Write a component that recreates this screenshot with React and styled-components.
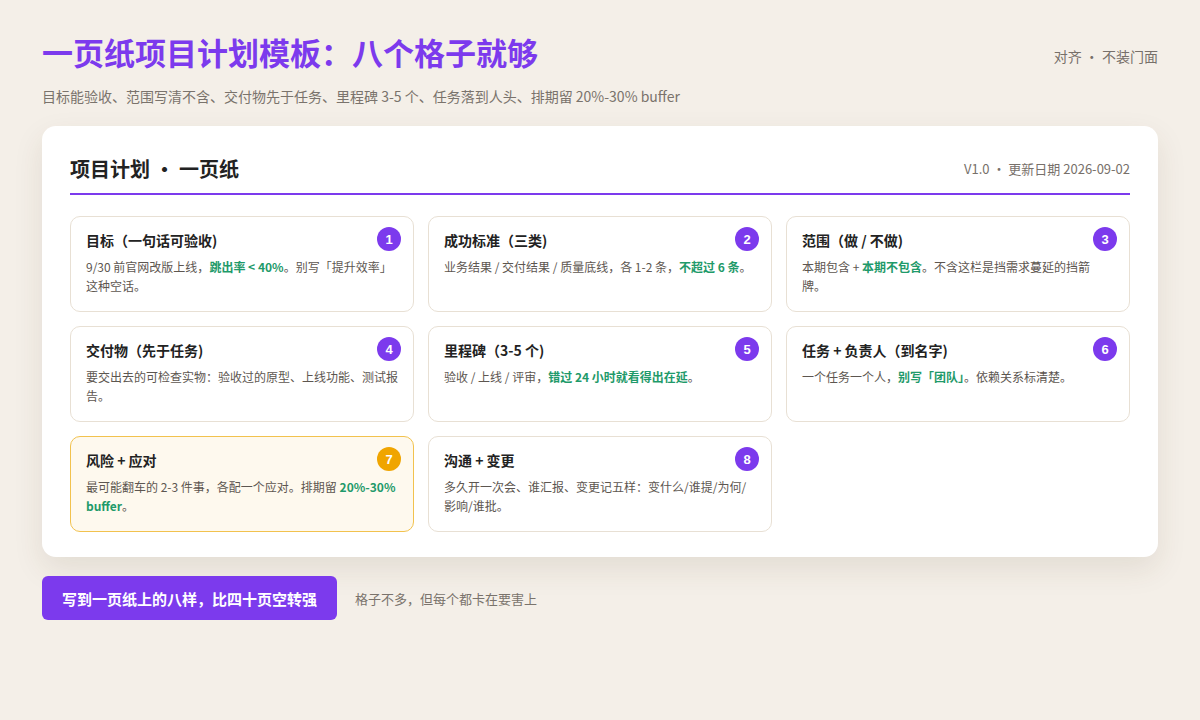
import React from "react";
import styled, { createGlobalStyle } from "styled-components";

const Global = createGlobalStyle`
  body { margin: 0; background: #f4efe8; font-family: "Noto Sans CJK SC", "Noto Sans", sans-serif; }
`;

const Page = styled.div`
  padding: 30px 42px;
`;

const Top = styled.div`
  display: flex;
  justify-content: space-between;
  align-items: flex-start;
`;

const Title = styled.h1`
  margin: 0;
  font-size: 31px;
  line-height: 44px;
  color: #7c3aed;
  font-weight: 700;
`;

const Tag = styled.div`
  font-size: 14px;
  color: #77706a;
  margin-top: 16px;
`;

const Sub = styled.p`
  margin: 12px 0 20px;
  font-size: 14px;
  color: #7a736c;
`;

const Card = styled.div`
  background: #fff;
  border-radius: 14px;
  padding: 28px 28px 25px;
  box-shadow: 0 12px 30px rgba(80, 60, 30, 0.1);
`;

const CardHead = styled.div`
  display: flex;
  justify-content: space-between;
  align-items: center;
  padding-bottom: 10px;
  border-bottom: 2px solid #7c3aed;
  margin-bottom: 21px;
`;

const CardTitle = styled.h2`
  margin: 0;
  font-size: 20px;
  font-weight: 700;
  color: #222;
`;

const Meta = styled.span`
  font-size: 13px;
  color: #77706a;
`;

const Grid = styled.div`
  display: grid;
  grid-template-columns: repeat(3, 1fr);
  gap: 14px;
`;

const Cell = styled.div`
  position: relative;
  height: 96px;
  box-sizing: border-box;
  padding: 12px 15px;
  border-radius: 10px;
  border: 1px solid ${(p) => (p.$warn ? "#f2c24e" : "#e8e0d4")};
  background: ${(p) => (p.$warn ? "#fef9ee" : "#fff")};
`;

const CellTitle = styled.div`
  font-size: 14px;
  font-weight: 700;
  color: #222;
  line-height: 22px;
  margin-bottom: 6px;
`;

const Desc = styled.div`
  font-size: 12px;
  line-height: 19px;
  color: #5d5650;
`;

const Hl = styled.b`
  color: #1f9a6a;
`;

const Badge = styled.span`
  position: absolute;
  top: 10px;
  right: 12px;
  width: 24px;
  height: 24px;
  border-radius: 50%;
  background: ${(p) => (p.$warn ? "#f0a500" : "#7c3aed")};
  color: #fff;
  font-size: 13px;
  font-weight: 700;
  display: flex;
  align-items: center;
  justify-content: center;
  font-family: "Liberation Sans", sans-serif;
`;

const Footer = styled.div`
  display: flex;
  align-items: center;
  gap: 18px;
  margin-top: 19px;
`;

const Button = styled.button`
  background: #7c3aed;
  color: #fff;
  border: 0;
  border-radius: 6px;
  height: 44px;
  padding: 0 20px;
  font-size: 15px;
  font-weight: 700;
  font-family: inherit;
`;

const Note = styled.span`
  font-size: 13px;
  color: #7a736c;
`;

const items = [
  ["目标（一句话可验收)", <>9/30 前官网改版上线，<Hl>跳出率 &lt; 40%</Hl>。别写「提升效率」这种空话。</>],
  ["成功标准（三类)", <>业务结果 / 交付结果 / 质量底线，各 1-2 条，<Hl>不超过 6 条</Hl>。</>],
  ["范围（做 / 不做)", <>本期包含 + <Hl>本期不包含</Hl>。不含这栏是挡需求蔓延的挡箭牌。</>],
  ["交付物（先于任务)", <>要交出去的可检查实物：验收过的原型、上线功能、测试报告。</>],
  ["里程碑（3-5 个)", <>验收 / 上线 / 评审，<Hl>错过 24 小时就看得出在延</Hl>。</>],
  ["任务 + 负责人（到名字)", <>一个任务一个人，<Hl>别写「团队」</Hl>。依赖关系标清楚。</>],
  ["风险 + 应对", <>最可能翻车的 2-3 件事，各配一个应对。排期留 <Hl>20%-30% buffer</Hl>。</>],
  ["沟通 + 变更", <>多久开一次会、谁汇报、变更记五样：变什么/谁提/为何/影响/谁批。</>],
];

export default function App() {
  return (
    <Page>
      <Global />
      <Top>
        <Title>一页纸项目计划模板：八个格子就够</Title>
        <Tag>对齐 · 不装门面</Tag>
      </Top>
      <Sub>目标能验收、范围写清不含、交付物先于任务、里程碑 3-5 个、任务落到人头、排期留 20%-30% buffer</Sub>
      <Card>
        <CardHead>
          <CardTitle>项目计划 • 一页纸</CardTitle>
          <Meta>V1.0 · 更新日期 2026-09-02</Meta>
        </CardHead>
        <Grid>
          {items.map(([t, d], i) => (
            <Cell key={i} $warn={i === 6}>
              <CellTitle>{t}</CellTitle>
              <Desc>{d}</Desc>
              <Badge $warn={i === 6}>{i + 1}</Badge>
            </Cell>
          ))}
        </Grid>
      </Card>
      <Footer>
        <Button>写到一页纸上的八样，比四十页空转强</Button>
        <Note>格子不多，但每个都卡在要害上</Note>
      </Footer>
    </Page>
  );
}
